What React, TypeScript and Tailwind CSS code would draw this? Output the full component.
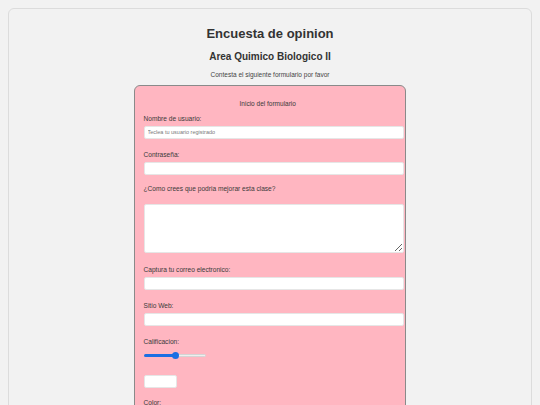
export default function App() {
  const label = "block text-[6.6px] leading-[8px] text-[#3a3a3a]";
  const field = "block h-[13.5px] w-[260px] rounded-[2px] border border-[#e6e6e6] bg-white px-[3px] text-[5.5px] outline-none placeholder:text-[#7a7a7a]";

  return (
    <div className="min-h-screen bg-[#f2f2f2] px-2 pt-2 font-['Liberation_Sans',Arial,sans-serif] text-[#333]">
      <div className="rounded-md border border-[#dcdcdc] bg-[#f2f2f2] pt-[17px] pb-10">
        <h1 className="text-center text-[13px] font-bold leading-[15px]">Encuesta de opinion</h1>
        <h2 className="mt-[10px] text-center text-[10px] font-bold leading-[12px]">Area Quimico Biologico II</h2>
        <p className="mt-[8px] text-center text-[6.5px] leading-[8px] text-[#444]">
          Contesta el siguiente formulario por favor
        </p>

        <form className="mx-auto mt-[6px] w-[272px] rounded-md border border-[#8a8a8a] bg-[#ffb6c1] pl-[8.5px] pr-[9px] pt-[14px] pb-6">
          <p className="pr-[4px] text-center text-[6.5px] leading-[8px] text-[#3a3a3a]">Inicio del formulario</p>

          <label className={`${label} mt-[7px]`}>Nombre de usuario:</label>
          <input className={`${field} mt-[2.5px]`} placeholder="Teclea tu usuario registrado" />

          <label className={`${label} mt-[12px]`}>Contraseña:</label>
          <input type="password" className={`${field} mt-[2.5px]`} />

          <label className={`${label} mt-[10px]`}>¿Como crees que podria mejorar esta clase?</label>
          <textarea className="mt-[11px] block h-[49px] w-[260px] rounded-[2px] border border-[#e6e6e6] bg-white text-[6px] outline-none" />

          <label className={`${label} mt-[13px]`}>Captura tu correo electronico:</label>
          <input type="email" className={`${field} mt-[2.5px]`} />

          <label className={`${label} mt-[12px]`}>Sitio Web:</label>
          <input type="url" className={`${field} mt-[2.5px]`} />

          <label className={`${label} mt-[12px]`}>Calificacion:</label>
          <div className="relative mt-[6px] h-[6.5px] w-[62px]">
            <div className="absolute top-[2px] left-0 h-[2.5px] w-[32px] rounded-l-full bg-[#1b6fe3]" />
            <div className="absolute top-[2px] right-0 h-[2.5px] w-[31px] rounded-r-full border border-[#d4d4d4] bg-[#efefef]" />
            <div className="absolute top-0 left-[28.5px] h-[6.5px] w-[6.5px] rounded-full bg-[#1b6fe3]" />
          </div>

          <div className="mt-[16.5px] h-[13px] w-[33px] rounded-[2px] border border-[#e6e6e6] bg-white" />

          <label className={`${label} mt-[11px]`}>Color:</label>
        </form>
      </div>
    </div>
  );
}
